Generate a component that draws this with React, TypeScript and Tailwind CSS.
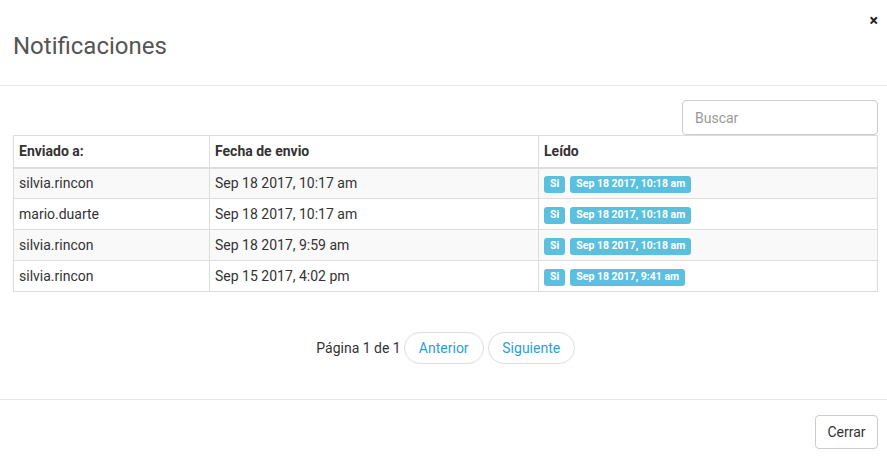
import React from "react";

const rows = [
  { to: "silvia.rincon", date: "Sep 18 2017, 10:17 am", read: "Sep 18 2017, 10:18 am" },
  { to: "mario.duarte", date: "Sep 18 2017, 10:17 am", read: "Sep 18 2017, 10:18 am" },
  { to: "silvia.rincon", date: "Sep 18 2017, 9:59 am", read: "Sep 18 2017, 10:18 am" },
  { to: "silvia.rincon", date: "Sep 15 2017, 4:02 pm", read: "Sep 18 2017, 9:41 am" },
];

export default function App() {
  return (
    <div
      className="w-[887px] h-[459px] bg-white text-[#333] overflow-hidden"
      style={{ fontFamily: "Roboto, 'Liberation Sans', sans-serif" }}
    >
      {/* Header */}
      <div className="relative h-[86px] border-b border-[#e5e5e5] px-[13px]">
        <button className="absolute right-[9px] top-[13px] text-[16px] font-bold leading-none text-[#222]">
          ×
        </button>
        <h4 className="pt-[31px] text-[24px] leading-[30px] text-[#555] font-normal">Notificaciones</h4>
      </div>

      {/* Body */}
      <div className="h-[313px] pl-[13px] pr-[9px] pt-[14px]">
        <div className="flex justify-end">
          <input
            placeholder="Buscar"
            className="w-[196px] h-[35px] rounded-[4px] border border-[#ccc] px-[12px] text-[14px] text-[#555] placeholder:text-[#999] outline-none"
          />
        </div>
        <table className="w-[865px] table-fixed border-collapse border border-[#ddd] text-[14px]">
          <colgroup>
            <col className="w-[196px]" />
            <col className="w-[329px]" />
            <col />
          </colgroup>
          <thead>
            <tr className="h-[32px]">
              <th className="border border-[#ddd] border-b-2 px-[5px] text-left font-bold text-[#333]">Enviado a:</th>
              <th className="border border-[#ddd] border-b-2 px-[5px] text-left font-bold text-[#333]">Fecha de envio</th>
              <th className="border border-[#ddd] border-b-2 px-[5px] text-left font-bold text-[#333]">Leído</th>
            </tr>
          </thead>
          <tbody>
            {rows.map((r, i) => (
              <tr key={i} className={i % 2 === 0 ? "h-[31px] bg-[#f9f9f9]" : "h-[31px] bg-white"}>
                <td className="border border-[#ddd] px-[5px] text-[#333]">{r.to}</td>
                <td className="border border-[#ddd] px-[5px] text-[#333]">{r.date}</td>
                <td className="border border-[#ddd] px-[5px]">
                  <div className="mt-[2px] flex items-center gap-[5px]">
                    <span className="inline-flex h-[17px] items-center rounded-[3px] bg-[#5bc0de] px-[6px] text-[10.5px] font-bold text-white">Si</span>
                    <span className="inline-flex h-[17px] items-center rounded-[3px] bg-[#5bc0de] px-[6px] text-[10.5px] font-bold text-white">{r.read}</span>
                  </div>
                </td>
              </tr>
            ))}
          </tbody>
        </table>
        <div className="mt-[40px] flex items-center justify-center text-[14px]">
          <span className="text-[#333] mr-[3px]">Página 1 de 1</span>
          <button className="h-[32px] w-[80px] rounded-full border border-[#ddd] text-[#2a9fd6] bg-white">Anterior</button>
          <button className="ml-[4px] h-[32px] w-[87px] rounded-full border border-[#ddd] text-[#2a9fd6] bg-white">Siguiente</button>
        </div>
      </div>

      {/* Footer */}
      <div className="h-[60px] border-t border-[#e5e5e5] flex justify-end items-start pt-[15px] pr-[9px]">
        <button className="h-[34px] w-[63px] rounded-[4px] border border-[#ccc] bg-white text-[14px] text-[#333]">Cerrar</button>
      </div>
    </div>
  );
}
